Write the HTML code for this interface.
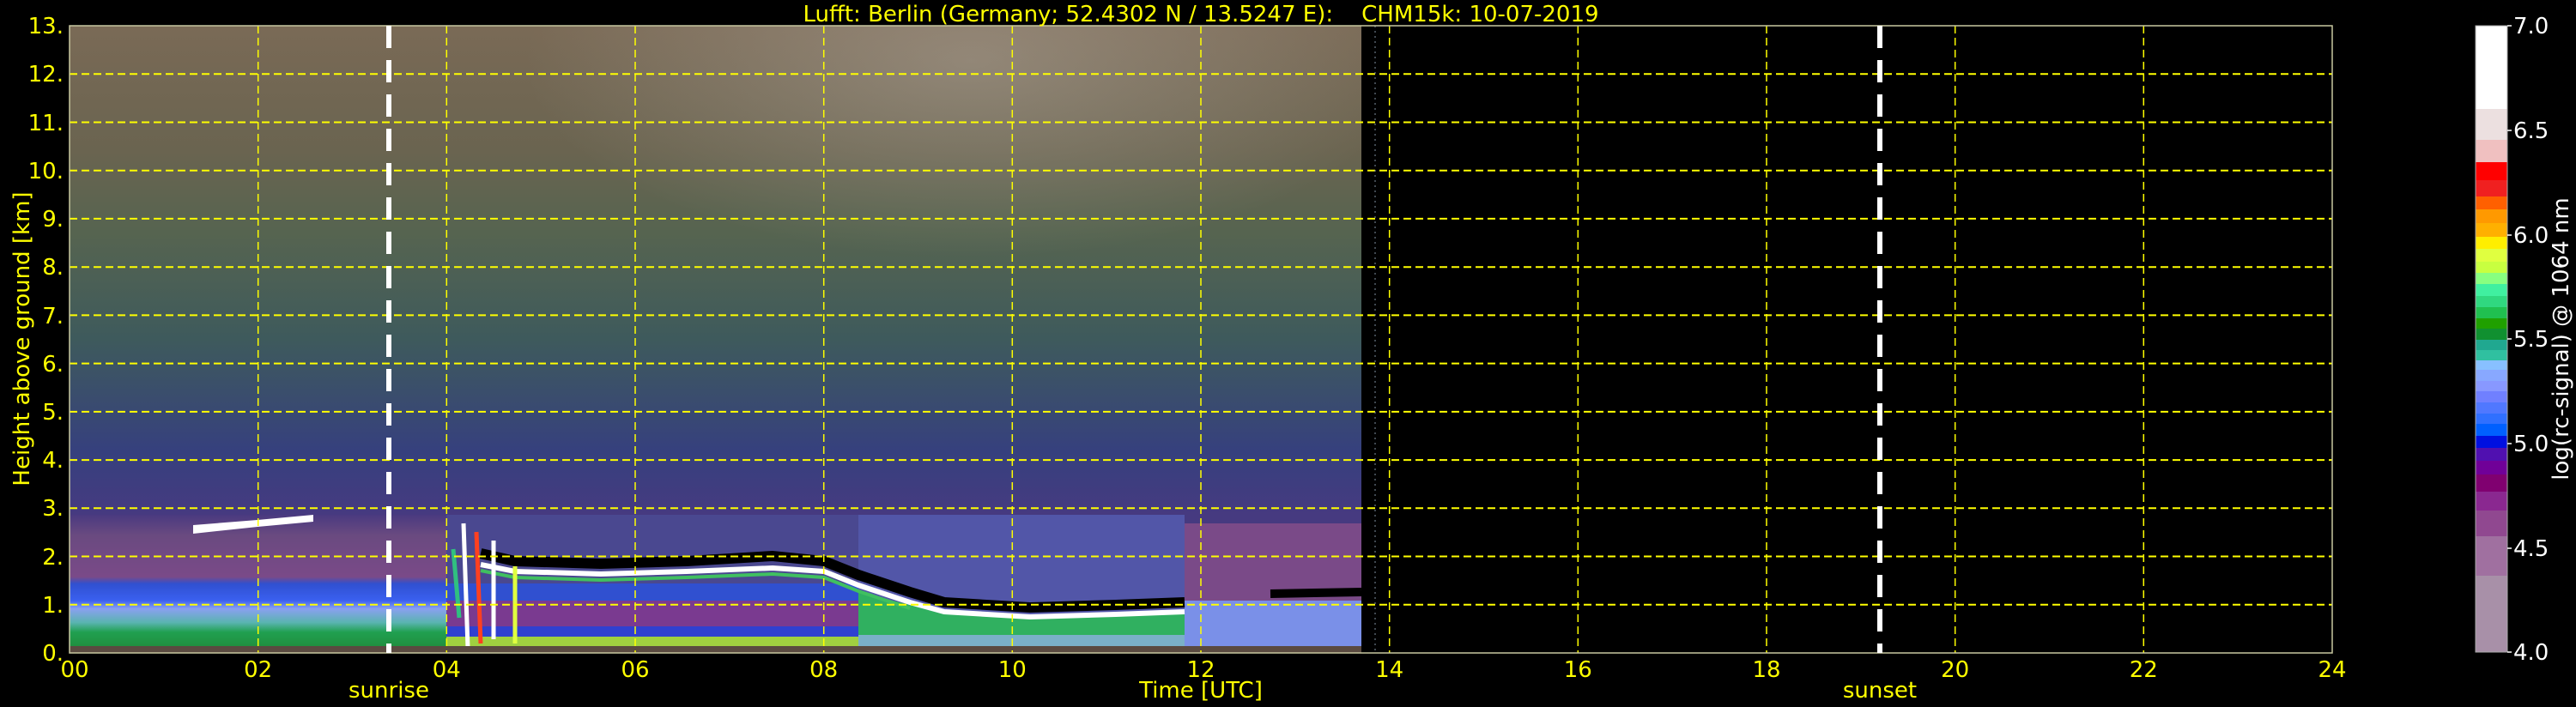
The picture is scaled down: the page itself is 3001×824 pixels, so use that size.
<!DOCTYPE html>
<html><head><meta charset="utf-8"><style>
html,body{margin:0;padding:0;background:#000;}
svg{display:block}
text{font-family:"DejaVu Sans","Liberation Sans",sans-serif;}
</style></head><body>
<svg width="3001" height="824" viewBox="0 0 3001 824" xmlns="http://www.w3.org/2000/svg">
<defs>
<linearGradient id="up" x1="0" y1="30" x2="0" y2="761" gradientUnits="userSpaceOnUse">
<stop offset="0" stop-color="#7a6a56"/>
<stop offset="0.2" stop-color="#6a6450"/>
<stop offset="0.33" stop-color="#566450"/>
<stop offset="0.5" stop-color="#3e5a5c"/>
<stop offset="0.68" stop-color="#36407e"/>
<stop offset="0.78" stop-color="#463a80"/>
<stop offset="1" stop-color="#463a80"/>
</linearGradient>
<radialGradient id="wp" cx="0.5" cy="0.5" r="0.5">
<stop offset="0" stop-color="#c8c0b8" stop-opacity="0.35"/>
<stop offset="1" stop-color="#c8c0b8" stop-opacity="0"/>
</radialGradient>
<linearGradient id="pre" x1="0" y1="600" x2="0" y2="761" gradientUnits="userSpaceOnUse">
<stop offset="0" stop-color="#4a3a80"/>
<stop offset="0.15" stop-color="#6a4a80"/>
<stop offset="0.45" stop-color="#7a4a88"/>
<stop offset="0.5" stop-color="#3050d0"/>
<stop offset="0.62" stop-color="#3a60f0"/>
<stop offset="0.68" stop-color="#8aa0f0"/>
<stop offset="0.78" stop-color="#5ab4b0"/>
<stop offset="0.85" stop-color="#20a050"/>
<stop offset="0.95" stop-color="#209040"/>
<stop offset="0.96" stop-color="#505050"/>
<stop offset="1" stop-color="#505050"/>
</linearGradient>
<linearGradient id="cb" x1="0" y1="30" x2="0" y2="760" gradientUnits="userSpaceOnUse">
<stop offset="0" stop-color="#fff"/><stop offset="0.1329" stop-color="#fff"/>
<stop offset="0.1329" stop-color="#ece0e0"/><stop offset="0.1822" stop-color="#ece0e0"/>
<stop offset="0.1822" stop-color="#f0c0c0"/><stop offset="0.2178" stop-color="#f0c0c0"/>
<stop offset="0.2178" stop-color="#ff0000"/><stop offset="0.2466" stop-color="#ff0000"/>
<stop offset="0.2466" stop-color="#f02020"/><stop offset="0.2726" stop-color="#f02020"/>
<stop offset="0.2726" stop-color="#ff6000"/><stop offset="0.2932" stop-color="#ff6000"/>
<stop offset="0.2932" stop-color="#ff9900"/><stop offset="0.3151" stop-color="#ff9900"/>
<stop offset="0.3151" stop-color="#ffb000"/><stop offset="0.3370" stop-color="#ffb000"/>
<stop offset="0.3370" stop-color="#ffee00"/><stop offset="0.3562" stop-color="#ffee00"/>
<stop offset="0.3562" stop-color="#e0ff40"/><stop offset="0.3767" stop-color="#e0ff40"/>
<stop offset="0.3767" stop-color="#c8ff40"/><stop offset="0.3945" stop-color="#c8ff40"/>
<stop offset="0.3945" stop-color="#88ff80"/><stop offset="0.4123" stop-color="#88ff80"/>
<stop offset="0.4123" stop-color="#40f0a0"/><stop offset="0.4315" stop-color="#40f0a0"/>
<stop offset="0.4315" stop-color="#30d880"/><stop offset="0.4493" stop-color="#30d880"/>
<stop offset="0.4493" stop-color="#20c050"/><stop offset="0.4671" stop-color="#20c050"/>
<stop offset="0.4671" stop-color="#20a000"/><stop offset="0.4836" stop-color="#20a000"/>
<stop offset="0.4836" stop-color="#109030"/><stop offset="0.5014" stop-color="#109030"/>
<stop offset="0.5014" stop-color="#20a890"/><stop offset="0.5178" stop-color="#20a890"/>
<stop offset="0.5178" stop-color="#30c0a0"/><stop offset="0.5342" stop-color="#30c0a0"/>
<stop offset="0.5342" stop-color="#88c0ff"/><stop offset="0.5493" stop-color="#88c0ff"/>
<stop offset="0.5493" stop-color="#88a8ff"/><stop offset="0.5671" stop-color="#88a8ff"/>
<stop offset="0.5671" stop-color="#8898ff"/><stop offset="0.5836" stop-color="#8898ff"/>
<stop offset="0.5836" stop-color="#7080ff"/><stop offset="0.6014" stop-color="#7080ff"/>
<stop offset="0.6014" stop-color="#5078ff"/><stop offset="0.6192" stop-color="#5078ff"/>
<stop offset="0.6192" stop-color="#3070ff"/><stop offset="0.6356" stop-color="#3070ff"/>
<stop offset="0.6356" stop-color="#0060ff"/><stop offset="0.6548" stop-color="#0060ff"/>
<stop offset="0.6548" stop-color="#0010e0"/><stop offset="0.6740" stop-color="#0010e0"/>
<stop offset="0.6740" stop-color="#5010b0"/><stop offset="0.6945" stop-color="#5010b0"/>
<stop offset="0.6945" stop-color="#700098"/><stop offset="0.7164" stop-color="#700098"/>
<stop offset="0.7164" stop-color="#800070"/><stop offset="0.7438" stop-color="#800070"/>
<stop offset="0.7438" stop-color="#8a2890"/><stop offset="0.7740" stop-color="#8a2890"/>
<stop offset="0.7740" stop-color="#904890"/><stop offset="0.8151" stop-color="#904890"/>
<stop offset="0.8151" stop-color="#a070a0"/><stop offset="0.8781" stop-color="#a070a0"/>
<stop offset="0.8781" stop-color="#a890a8"/><stop offset="1" stop-color="#a890a8"/>
</linearGradient>
</defs>

<rect x="81" y="30" width="1505" height="731" fill="url(#up)"/>
<svg x="81" y="30" width="1505" height="731" overflow="hidden"><ellipse cx="1050" cy="40" rx="520" ry="230" fill="url(#wp)"/></svg>
<rect x="81" y="600" width="450" height="161" fill="url(#pre)"/>
<polygon points="225,612 300,606 365,600 365,608 300,614 225,622" fill="#fff"/>
<rect x="520" y="600" width="480" height="161" fill="#4a4890"/>
<rect x="520" y="680" width="480" height="20" fill="#3050d0"/>
<rect x="520" y="700" width="480" height="30" fill="#7a3a90"/>
<rect x="520" y="730" width="480" height="12" fill="#3040d0"/>
<rect x="520" y="742" width="480" height="15" fill="#a0d040"/>
<rect x="1000" y="600" width="380" height="161" fill="#5256a8"/>
<polygon points="1000,690 1060,705 1100,716 1380,716 1380,757 1000,757" fill="#30b060"/>
<rect x="1000" y="740" width="380" height="17" fill="#7ab0c8"/>
<rect x="1380" y="610" width="206" height="90" fill="#7a4a88"/>
<rect x="1380" y="700" width="206" height="57" fill="#7a90e8"/>
<polyline points="560,645 600,654 700,657 800,654 900,648 960,654 1000,670 1060,690 1100,702 1200,708 1300,705 1380,702" fill="none" stroke="#000" stroke-width="12"/>
<polyline points="560,658 600,666 700,669 800,666 900,662 960,666 1000,682 1060,702 1100,713 1200,719 1300,716 1380,713" fill="none" stroke="#fff" stroke-width="6"/>
<polyline points="560,665 600,673 700,676 800,673 900,669 960,673 1000,689 1060,709" fill="none" stroke="#40c060" stroke-width="4"/>
<polyline points="1480,692 1586,690" fill="none" stroke="#000" stroke-width="10"/>
<g stroke-width="5" fill="none">
<line x1="540" y1="610" x2="545" y2="755" stroke="#fff"/>
<line x1="555" y1="620" x2="560" y2="750" stroke="#ff4020"/>
<line x1="575" y1="630" x2="575" y2="745" stroke="#fff"/>
<line x1="600" y1="660" x2="600" y2="750" stroke="#e0ff40"/>
<line x1="528" y1="640" x2="535" y2="720" stroke="#30c080"/>
</g>
<rect x="81" y="753" width="1505" height="8" fill="#5a4a40"/>

<g stroke="#ffff00" stroke-width="2" stroke-dasharray="9,5">
<line x1="81" x2="2717" y1="704.8" y2="704.8"/>
<line x1="81" x2="2717" y1="648.5" y2="648.5"/>
<line x1="81" x2="2717" y1="592.3" y2="592.3"/>
<line x1="81" x2="2717" y1="536.1" y2="536.1"/>
<line x1="81" x2="2717" y1="479.9" y2="479.9"/>
<line x1="81" x2="2717" y1="423.6" y2="423.6"/>
<line x1="81" x2="2717" y1="367.4" y2="367.4"/>
<line x1="81" x2="2717" y1="311.2" y2="311.2"/>
<line x1="81" x2="2717" y1="254.9" y2="254.9"/>
<line x1="81" x2="2717" y1="198.7" y2="198.7"/>
<line x1="81" x2="2717" y1="142.5" y2="142.5"/>
<line x1="81" x2="2717" y1="86.2" y2="86.2"/>
</g>
<g stroke="#ffff00" stroke-width="1.5" stroke-dasharray="9,5">
<line y1="30" y2="761" x1="300.7" x2="300.7"/>
<line y1="30" y2="761" x1="520.3" x2="520.3"/>
<line y1="30" y2="761" x1="740" x2="740"/>
<line y1="30" y2="761" x1="959.7" x2="959.7"/>
<line y1="30" y2="761" x1="1179.3" x2="1179.3"/>
<line y1="30" y2="761" x1="1399" x2="1399"/>
<line y1="30" y2="761" x1="1618.7" x2="1618.7"/>
<line y1="30" y2="761" x1="1838.3" x2="1838.3"/>
<line y1="30" y2="761" x1="2058" x2="2058"/>
<line y1="30" y2="761" x1="2277.7" x2="2277.7"/>
<line y1="30" y2="761" x1="2497.3" x2="2497.3"/>
</g>
<line x1="1602" y1="30" x2="1602" y2="761" stroke="#8090a0" stroke-width="1" stroke-dasharray="2,4"/>
<rect x="81" y="30" width="2636" height="731" fill="none" stroke="#c8c8a0" stroke-width="1.5"/>
<line x1="453" y1="30" x2="453" y2="761" stroke="#fff" stroke-width="6" stroke-dasharray="26,14"/>
<line x1="2190" y1="30" x2="2190" y2="761" stroke="#fff" stroke-width="6" stroke-dasharray="26,14"/>

<g fill="#ffff00" font-size="26" text-anchor="end">
<text x="74" y="770">0.</text>
<text x="74" y="714">1.</text>
<text x="74" y="658">2.</text>
<text x="74" y="601">3.</text>
<text x="74" y="545">4.</text>
<text x="74" y="489">5.</text>
<text x="74" y="433">6.</text>
<text x="74" y="377">7.</text>
<text x="74" y="320">8.</text>
<text x="74" y="264">9.</text>
<text x="74" y="208">10.</text>
<text x="74" y="152">11.</text>
<text x="74" y="95">12.</text>
<text x="74" y="39">13.</text>
</g>
<g fill="#ffff00" font-size="26" text-anchor="middle">
<text x="87" y="789">00</text>
<text x="300.7" y="789">02</text>
<text x="520.3" y="789">04</text>
<text x="740" y="789">06</text>
<text x="959.7" y="789">08</text>
<text x="1179.3" y="789">10</text>
<text x="1399" y="789">12</text>
<text x="1618.7" y="789">14</text>
<text x="1838.3" y="789">16</text>
<text x="2058" y="789">18</text>
<text x="2277.7" y="789">20</text>
<text x="2497.3" y="789">22</text>
<text x="2717" y="789">24</text>
<text x="453" y="813">sunrise</text>
<text x="2190" y="813">sunset</text>
<text x="1399" y="813">Time [UTC]</text>
<text x="1399" y="25" xml:space="preserve">Lufft: Berlin (Germany; 52.4302 N / 13.5247 E):    CHM15k: 10-07-2019</text>
<text transform="translate(34,395) rotate(-90)">Height above ground [km]</text>
</g>
<rect x="2884" y="30" width="37" height="730" fill="url(#cb)" stroke="#aaa" stroke-width="1"/>
<g stroke="#fff" stroke-width="1.5">
<line x1="2921" x2="2926" y1="30" y2="30"/><line x1="2921" x2="2926" y1="152" y2="152"/>
<line x1="2921" x2="2926" y1="274" y2="274"/><line x1="2921" x2="2926" y1="395" y2="395"/>
<line x1="2921" x2="2926" y1="517" y2="517"/><line x1="2921" x2="2926" y1="639" y2="639"/>
<line x1="2921" x2="2926" y1="760" y2="760"/>
</g>
<g fill="#fff" font-size="26">
<text x="2928" y="39">7.0</text>
<text x="2928" y="161">6.5</text>
<text x="2928" y="283">6.0</text>
<text x="2928" y="404">5.5</text>
<text x="2928" y="526">5.0</text>
<text x="2928" y="648">4.5</text>
<text x="2928" y="769">4.0</text>
<text text-anchor="middle" transform="translate(2992,395) rotate(-90)">log(rc-signal) @ 1064 nm</text>
</g>
</svg>
</body></html>
